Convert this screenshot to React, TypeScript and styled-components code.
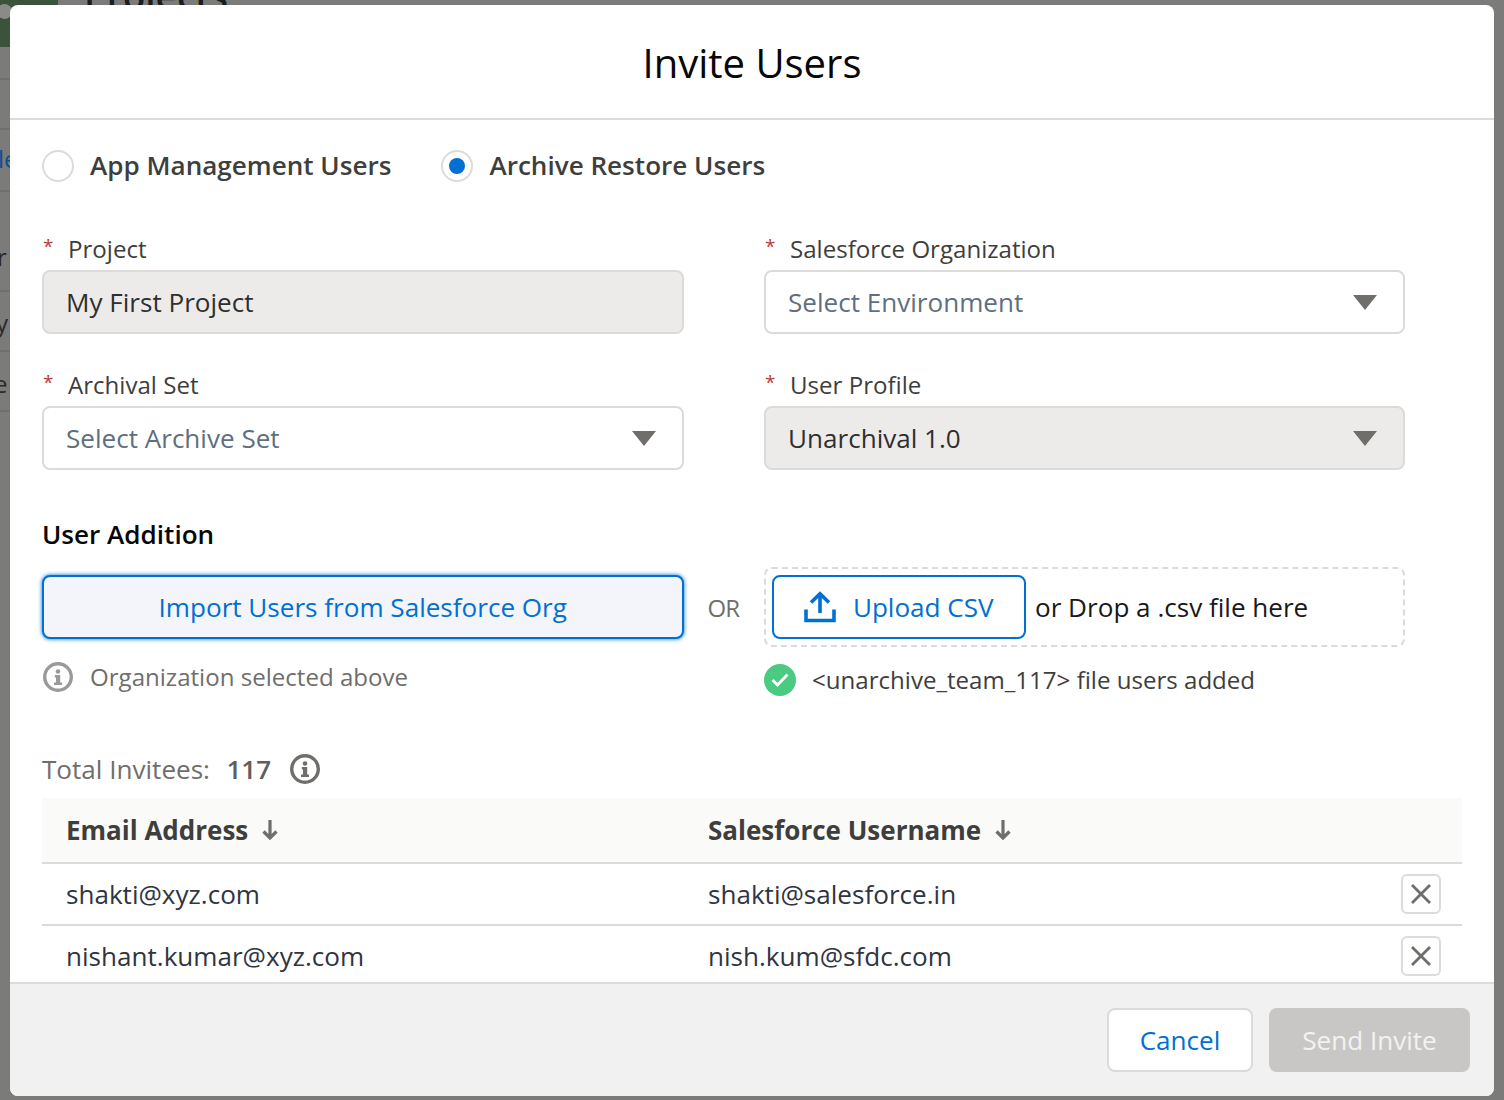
import React from "react";
import styled, { createGlobalStyle } from "styled-components";

const Global = createGlobalStyle`
  html, body { margin: 0; padding: 0; background: #7b7b79; }
  body { font-family: "Open Sans", "Liberation Sans", sans-serif; color: #3e3e3c; }
  * { box-sizing: border-box; }
`;

const Page = styled.div`
  position: relative;
  width: 1504px;
  height: 1100px;
  overflow: hidden;
  padding: 5px 10px 4px;
  background: #7b7b79;
`;

const BackLogo = styled.div`
  position: absolute; left: 0; top: 0; width: 58px; height: 47px; background: #3b533b;
  &::before {
    content: ""; position: absolute; left: -3px; top: 4px; width: 15px; height: 15px;
    border-radius: 50%; background: #8a8a88;
  }
`;
const BackTitle = styled.div`
  position: absolute; left: 84px; top: -24px; font-size: 37px; font-weight: 600; color: #1c1c1c; line-height: 40px;
`;
const BackLine = styled.div<{ $y: number }>`
  position: absolute; left: 0; width: 10px; height: 2px; top: ${(p) => p.$y}px; background: #6f6f6d;
`;
const BackStub = styled.div<{ $y: number; $blue?: boolean; $indent: number }>`
  position: absolute; left: 0; width: 10px; overflow: hidden; top: ${(p) => p.$y}px;
  font-size: 24px; line-height: 30px; white-space: nowrap;
  text-indent: ${(p) => p.$indent}px;
  color: ${(p) => (p.$blue ? "#0b4f92" : "#2a2a2a")};
`;

const Modal = styled.div`
  position: relative;
  width: 1484px;
  height: 1091px;
  background: #fff;
  border-radius: 8px;
  overflow: hidden;
  display: flex;
  flex-direction: column;
`;

const Header = styled.header`
  height: 115px;
  flex: none;
  border-bottom: 2px solid #dddbda;
  display: flex;
  align-items: center;
  justify-content: center;
  padding-top: 2px;
  font-size: 40px;
  line-height: 48px;
  color: #080707;
`;

const Body = styled.main`
  flex: 1;
  min-height: 0;
  overflow: hidden;
  padding: 30px 32px 0;
  display: flex;
  flex-direction: column;
`;

const RadioRow = styled.div`
  display: flex;
  align-items: center;
  gap: 50px;
  height: 32px;
`;
const RadioOption = styled.label`
  display: flex;
  align-items: center;
  gap: 16px;
`;
const RadioText = styled.span`
  font-size: 26.08px;
  font-weight: 600;
  color: #3e3e3c;
  line-height: 32px;
  margin-top: -2px;
`;
const RadioDot = styled.span<{ $on?: boolean }>`
  width: 32px;
  height: 32px;
  border-radius: 50%;
  border: 2px solid #dddbda;
  background: #fff;
  display: flex;
  align-items: center;
  justify-content: center;
  &::after {
    content: "";
    display: ${(p) => (p.$on ? "block" : "none")};
    width: 16px;
    height: 16px;
    border-radius: 50%;
    background: #0070d2;
  }
`;

const FieldGrid = styled.div`
  display: grid;
  grid-template-columns: 641.5px 641px;
  column-gap: 80.5px;
  row-gap: 38px;
  margin-top: 54px;
`;
const Field = styled.div`
  display: flex;
  flex-direction: column;
`;
const Label = styled.div`
  position: relative;
  height: 34px;
  padding-left: 26px;
  font-size: 24.08px;
  line-height: 26px;
  color: #3e3e3c;
  &::before {
    content: "*";
    position: absolute;
    left: 1px;
    top: -3px;
    color: #c23934;
    font-size: 19px;
  }
`;
const Control = styled.div<{ $disabled?: boolean; $placeholder?: boolean }>`
  height: 64px;
  border: 2px solid #dddbda;
  border-radius: 8px;
  background: ${(p) => (p.$disabled ? "#ecebea" : "#fff")};
  color: ${(p) => (p.$placeholder ? "#5f6f7f" : "#2f2f2f")};
  padding: 0 26px 0 22px;
  display: flex;
  align-items: center;
  justify-content: space-between;
  font-size: 26.08px;
  line-height: 32px;
`;
const Caret = styled.span`
  width: 0;
  height: 0;
  border-left: 12px solid transparent;
  border-right: 12px solid transparent;
  border-top: 15px solid #706e6b;
`;

const SectionTitle = styled.h2`
  margin: 46px 0 0;
  font-size: 26.08px;
  line-height: 36px;
  font-weight: 600;
  color: #080707;
`;

const AdditionGrid = styled.div`
  display: grid;
  grid-template-columns: 641.5px 80.5px 641px;
  margin-top: 15px;
`;
const ImportButton = styled.button`
  height: 64px;
  margin-top: 8px;
  width: 641.5px;
  border: 2px solid #0070d2;
  border-radius: 8px;
  background: #f3f5fa;
  box-shadow: 0 0 4px #0070d2;
  color: #0070d2;
  font: 400 26.08px/32px "Open Sans", sans-serif;
`;
const OrText = styled.div`
  padding: 0 0 0 24px;
  display: flex;
  align-items: center;
  font-size: 24px;
  letter-spacing: -1px;
  color: #706e6b;
`;
const DropZone = styled.div`
  height: 80px;
  border: 2px dashed #dddbda;
  border-radius: 8px;
  padding: 6px;
  display: flex;
  align-items: center;
  gap: 9px;
  font-size: 26.08px;
  color: #181818;
  white-space: nowrap;
`;
const UploadButton = styled.button`
  width: 254px;
  height: 64px;
  border: 2px solid #0070d2;
  border-radius: 8px;
  background: #fff;
  color: #0070d2;
  display: flex;
  align-items: center;
  justify-content: center;
  gap: 16.500px;
  padding: 0;
  font: 400 26.08px/32px "Open Sans", sans-serif;
`;
const HintLeft = styled.div`
  grid-column: 1;
  align-self: start;
  margin-top: 12px;
  display: flex;
  align-items: center;
  gap: 16px;
  font-size: 24.08px;
  line-height: 36px;
  color: #706e6b;
`;
const HintRight = styled.div`
  grid-column: 3;
  margin-top: 15px;
  display: flex;
  align-items: center;
  gap: 16px;
  font-size: 24.08px;
  line-height: 36px;
  color: #3e3e3c;
`;
const GreenCheck = styled.span`
  width: 32px;
  height: 32px;
  border-radius: 50%;
  background: #4bca81;
  display: flex;
  align-items: center;
  justify-content: center;
`;

const TotalRow = styled.div`
  display: flex;
  align-items: center;
  margin-top: 53px;
  height: 40px;
  font-size: 26.08px;
  color: #706e6b;
`;
const TotalCount = styled.span`
  margin-left: 16.500px;
  font-weight: 600;
  color: #5f5e5c;
`;
const TotalInfo = styled.span`
  margin-left: 17.500px;
  display: flex;
`;

const Table = styled.div`
  width: 1420px;
  margin-top: 11px;
  flex: none;
`;
const HeadRow = styled.div`
  display: grid;
  grid-template-columns: 642px 1fr;
  height: 66px;
  background: #fafaf9;
  border-bottom: 2px solid #dddbda;
  align-items: center;
  padding-left: 24px;
  font-size: 26px;
  font-weight: 700;
  color: #3e3e3c;
`;
const HeadCell = styled.div`
  display: flex;
  align-items: center;
  gap: 13px;
`;
const Row = styled.div`
  display: grid;
  grid-template-columns: 642px 1fr 40px;
  height: 62px;
  border-bottom: 2px solid #dddbda;
  align-items: center;
  padding: 0 21px 0 24px;
  font-size: 26.08px;
  color: #2f3542;
`;
const RemoveButton = styled.button`
  width: 40px;
  height: 40px;
  padding: 0;
  border: 2px solid #dddbda;
  border-radius: 6px;
  background: #fff;
  display: flex;
  align-items: center;
  justify-content: center;
`;

const Footer = styled.footer`
  flex: none;
  height: 114px;
  border-top: 2px solid #dddbda;
  background: #f1f1f1;
  display: flex;
  justify-content: flex-end;
  gap: 16px;
  padding: 24px 24px 0 0;
`;
const FooterButton = styled.button<{ $primary?: boolean }>`
  height: 64px;
  width: ${(p) => (p.$primary ? "201px" : "146px")};
  border-radius: 8px;
  border: ${(p) => (p.$primary ? "none" : "2px solid #dddbda")};
  background: ${(p) => (p.$primary ? "#c9c7c5" : "#fff")};
  color: ${(p) => (p.$primary ? "#f3f2f2" : "#0070d2")};
  font: 400 26.08px/32px "Open Sans", sans-serif;
`;

const InfoIcon = ({ color }: { color: string }) => (
  <svg width="32" height="32" viewBox="0 0 32 32" fill="none">
    <circle cx="16" cy="16" r="13.3" stroke={color} strokeWidth="3.4" />
    <circle cx="16" cy="10.5" r="2.3" fill={color} />
    <path d="M12.8 14h5.4v7.5H20v2.500h-8v-2.500h2v-5h-1.200z" fill={color} />
  </svg>
);
const ArrowDown = () => (
  <svg width="18" height="22" viewBox="0 0 18 22" fill="none">
    <path d="M9 1v18M2.500 12.500 9 19l6.500-6.500" stroke="#706e6b" strokeWidth="3.200" />
  </svg>
);
const CloseIcon = () => (
  <svg width="22" height="22" viewBox="0 0 22 22" fill="none">
    <path d="M2 2l18 18M20 2 2 20" stroke="#706e6b" strokeWidth="2.800" />
  </svg>
);
const UploadIcon = () => (
  <svg width="32" height="32" viewBox="0 0 32 32" fill="none">
    <path d="M16 22V3M7 11.500 16 2.800l9 8.700" stroke="#0070d2" strokeWidth="3.600" />
    <path d="M2 18.500V29.500H30V18.500" stroke="#0070d2" strokeWidth="3.600" />
  </svg>
);
const CheckIcon = () => (
  <svg width="20" height="16" viewBox="0 0 20 16" fill="none">
    <path d="M2.500 8 7.500 13 17.500 2.500" stroke="#fff" strokeWidth="2.800" />
  </svg>
);

export default function App() {
  return (
    <Page>
      <Global />
      <BackLogo />
      <BackTitle>Projects</BackTitle>
      {[78, 128, 190, 290, 350, 410].map((y) => (
        <BackLine key={y} $y={y} />
      ))}
      <BackStub $y={144} $blue $indent={-2}>le</BackStub>
      <BackStub $y={242} $indent={-3}>r</BackStub>
      <BackStub $y={308} $indent={-4}>y</BackStub>
      <BackStub $y={369} $indent={-6}>e</BackStub>
      <Modal>
        <Header>Invite Users</Header>
        <Body>
          <RadioRow>
            <RadioOption>
              <RadioDot />
              <RadioText>App Management Users</RadioText>
            </RadioOption>
            <RadioOption>
              <RadioDot $on />
              <RadioText>Archive Restore Users</RadioText>
            </RadioOption>
          </RadioRow>
          <FieldGrid>
            <Field>
              <Label>Project</Label>
              <Control $disabled>My First Project</Control>
            </Field>
            <Field>
              <Label>Salesforce Organization</Label>
              <Control $placeholder>
                Select Environment
                <Caret />
              </Control>
            </Field>
            <Field>
              <Label>Archival Set</Label>
              <Control $placeholder>
                Select Archive Set
                <Caret />
              </Control>
            </Field>
            <Field>
              <Label>User Profile</Label>
              <Control $disabled>
                Unarchival 1.0
                <Caret />
              </Control>
            </Field>
          </FieldGrid>
          <SectionTitle>User Addition</SectionTitle>
          <AdditionGrid>
            <ImportButton>Import Users from Salesforce Org</ImportButton>
            <OrText>OR</OrText>
            <DropZone>
              <UploadButton>
                <UploadIcon />
                Upload CSV
              </UploadButton>
              or Drop a .csv file here
            </DropZone>
            <HintLeft>
              <InfoIcon color="#9b9a98" />
              Organization selected above
            </HintLeft>
            <HintRight>
              <GreenCheck>
                <CheckIcon />
              </GreenCheck>
              {"<unarchive_team_117> file users added"}
            </HintRight>
          </AdditionGrid>
          <TotalRow>
            Total Invitees:
            <TotalCount>117</TotalCount>
            <TotalInfo>
              <InfoIcon color="#706e6b" />
            </TotalInfo>
          </TotalRow>
          <Table>
            <HeadRow>
              <HeadCell>
                Email Address <ArrowDown />
              </HeadCell>
              <HeadCell>
                Salesforce Username <ArrowDown />
              </HeadCell>
            </HeadRow>
            <Row>
              <span>shakti@xyz.com</span>
              <span>shakti@salesforce.in</span>
              <RemoveButton>
                <CloseIcon />
              </RemoveButton>
            </Row>
            <Row>
              <span>nishant.kumar@xyz.com</span>
              <span>nish.kum@sfdc.com</span>
              <RemoveButton>
                <CloseIcon />
              </RemoveButton>
            </Row>
          </Table>
        </Body>
        <Footer>
          <FooterButton>Cancel</FooterButton>
          <FooterButton $primary>Send Invite</FooterButton>
        </Footer>
      </Modal>
    </Page>
  );
}
